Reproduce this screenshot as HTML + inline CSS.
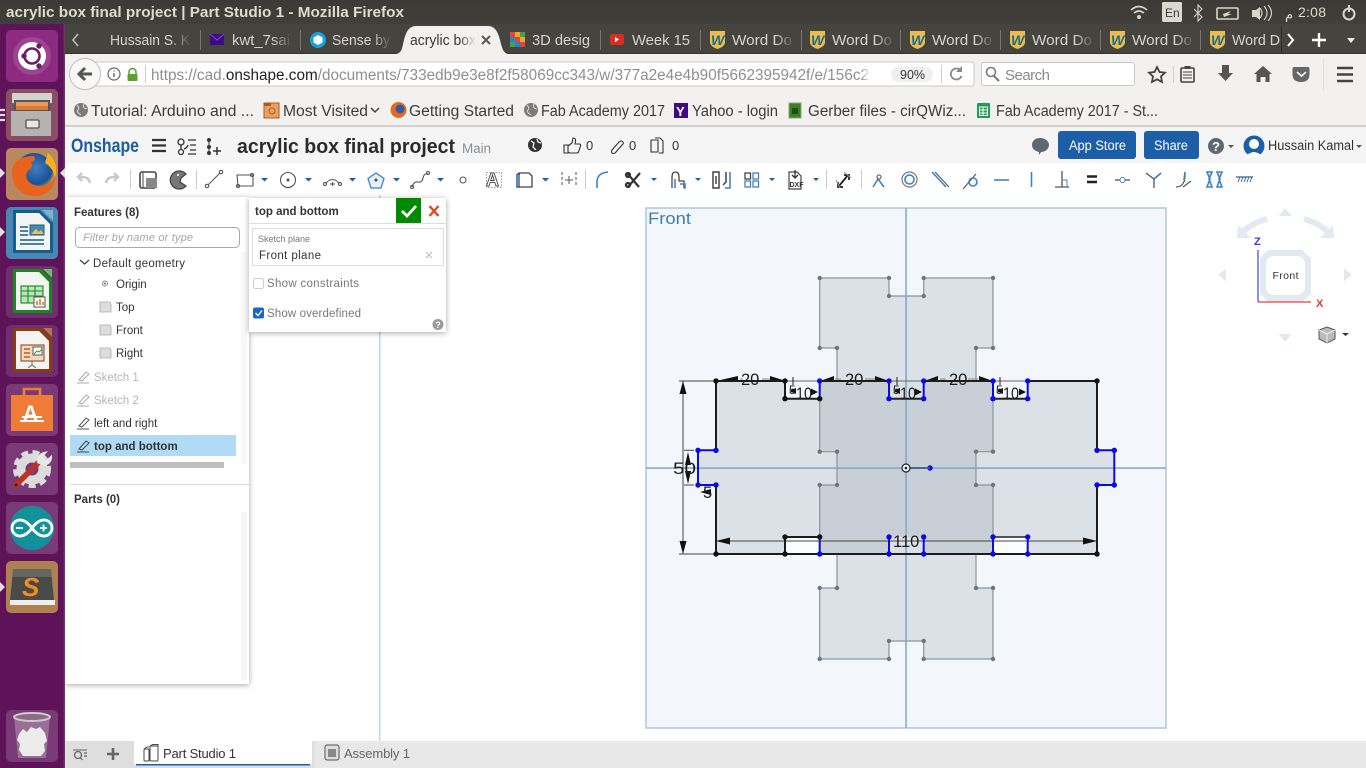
<!DOCTYPE html>
<html><head><meta charset="utf-8"><title>acrylic box final project | Part Studio 1 - Mozilla Firefox</title>
<style>
html,body{margin:0;padding:0;width:1366px;height:768px;overflow:hidden;background:#fff}
svg{display:block;position:absolute;left:0;top:0}
text{font-family:"Liberation Sans","DejaVu Sans",sans-serif}
.tab{font-size:15px;fill:#d6d5d0}
.bm{font-size:15.5px;fill:#3c3c3c}
.ft{font-size:11.5px;fill:#333}
.dim{font-size:16.5px;fill:#1c1c1c}
.car{fill:#1f5fa5}
.ti{fill:none;stroke:#555;stroke-width:1.1}
.tb{fill:none;stroke:#3d82c4;stroke-width:1.6}
.sk{fill:none;stroke:#1c1c1c;stroke-width:2}
.sb{fill:none;stroke:#0a0ae6;stroke-width:2}
.vl{fill:none;stroke:#8b939b;stroke-width:1.2}
</style></head><body>
<svg width="1366" height="768" viewBox="0 0 1366 768" xmlns="http://www.w3.org/2000/svg">
<defs>
<linearGradient id="top" x1="0" y1="0" x2="0" y2="1"><stop offset="0" stop-color="#3b3a36"/><stop offset="1" stop-color="#46453f"/></linearGradient>
<linearGradient id="fade" x1="0" x2="1" y1="0" y2="0"><stop offset="0" stop-color="#45443f" stop-opacity="0"/><stop offset="1" stop-color="#45443f"/></linearGradient>
<linearGradient id="fadew" x1="0" x2="1" y1="0" y2="0"><stop offset="0" stop-color="#f2f1f0" stop-opacity="0"/><stop offset="1" stop-color="#f2f1f0"/></linearGradient>
<linearGradient id="urlf" x1="0" x2="1" y1="0" y2="0"><stop offset="0" stop-color="#fff" stop-opacity="0"/><stop offset="1" stop-color="#fff"/></linearGradient>
<radialGradient id="ffx" cx=".55" cy=".4" r=".6"><stop offset="0" stop-color="#3d7fc0"/><stop offset=".7" stop-color="#1e4f95"/><stop offset="1" stop-color="#f5b21a"/></radialGradient>
<filter id="sh" x="-10%" y="-10%" width="125%" height="120%"><feDropShadow dx="0" dy="1" stdDeviation="3" flood-color="#000" flood-opacity=".35"/></filter>
</defs>

<!-- top panel -->
<rect width="1366" height="54" fill="url(#top)"/>
<text x="6" y="17" font-size="14.5" font-weight="bold" fill="#dfdbd2" textLength="398" lengthAdjust="spacingAndGlyphs">acrylic box final project | Part Studio 1 - Mozilla Firefox</text>
<!-- indicators -->
<g fill="none" stroke="#d8d5cd" stroke-width="1.6">
<path d="M1131 10q8-7 16 0M1134 13q5-4 10 0"/><circle cx="1139" cy="17" r="1.2" fill="#d8d5cd"/>
<path d="M1194 9l8 8-4 4v-16l4 4-8 8" stroke-width="1.1"/>
<rect x="1217" y="8" width="21" height="11" rx="1"/><path d="M1223 14l8-3-3 3 4 0-8 3z" fill="#d8d5cd" stroke="none"/>
<path d="M1260 8q4 5 0 10M1264 6q6 7 0 14M1268 5q7 8 0 16" stroke-width="1.1"/>
<path d="M1349 5v7" stroke-width="2"/><circle cx="1349" cy="14" r="5.5" stroke-width="2"/>
</g>
<rect x="1162" y="2" width="20" height="20" rx="1.5" fill="#dbd8d1"/>
<text x="1165" y="17" font-size="12" fill="#3b3a36">En</text>
<path d="M1252 10h4l4-3v13l-4-3h-4z" fill="#d8d5cd"/>
<text x="1285" y="19" font-size="13" fill="#dfdbd2" font-family="Noto Sans CJK SC">م</text>
<text x="1298" y="17" font-size="14" fill="#dfdbd2" textLength="28">2:08</text>

<!-- tabs -->
<rect y="24" x="65" width="1301" height="30" fill="#45443f"/>
<rect x="65" y="53" width="1301" height="1" fill="#35342f"/>
<path d="M78 34l-5 6 5 6" fill="none" stroke="#bbb" stroke-width="1.6"/>
<text x="110" y="45" class="tab" textLength="80" lengthAdjust="spacingAndGlyphs">Hussain S. K</text>
<rect x="170" y="30" width="22" height="20" fill="url(#fade)"/>
<rect x="200" y="30" width="1" height="20" fill="#77766f"/>
<rect x="210" y="34" width="14" height="11" fill="#400a87"/><path d="M210 34l7 6 7-6" fill="none" stroke="#7a55b0"/>
<text x="232" y="45" class="tab" textLength="58" lengthAdjust="spacingAndGlyphs">kwt_7sai</text>
<rect x="272" y="30" width="20" height="20" fill="url(#fade)"/>
<rect x="300" y="30" width="1" height="20" fill="#77766f"/>
<circle cx="318" cy="40" r="8" fill="#16a3dd"/><path d="M318 35l4.500 2.500v5l-4.500 2.500-4.500-2.500v-5z" fill="#fff"/>
<text x="332" y="45" class="tab" textLength="58" lengthAdjust="spacingAndGlyphs">Sense by</text>
<rect x="372" y="30" width="20" height="20" fill="url(#fade)"/>
<path d="M396 54c6-1 6-6 8-14 2-8 5-14 12-14h72c7 0 10 6 12 14 2 8 3 13 8 14z" fill="#f2f1f0"/>
<text x="410" y="45" font-size="15" fill="#3c3b37" textLength="66" lengthAdjust="spacingAndGlyphs">acrylic box</text>
<rect x="460" y="30" width="16" height="20" fill="url(#fadew)"/>
<path d="M482 36l8 8m0-8l-8 8" stroke="#5a5a5a" stroke-width="2"/>
<g>
<rect x="510" y="32" width="5" height="5" fill="#d9483b"/><rect x="515" y="32" width="5" height="5" fill="#f0a428"/><rect x="520" y="32" width="5" height="5" fill="#3aa655"/>
<rect x="510" y="37" width="5" height="5" fill="#2f7fc2"/><rect x="515" y="37" width="5" height="5" fill="#d9483b"/><rect x="520" y="37" width="5" height="5" fill="#f0a428"/>
<rect x="510" y="42" width="5" height="5" fill="#3aa655"/><rect x="515" y="42" width="5" height="5" fill="#2f7fc2"/><rect x="520" y="42" width="5" height="5" fill="#d9483b"/>
</g>
<text x="532" y="45" class="tab" textLength="58" lengthAdjust="spacingAndGlyphs">3D desig</text>
<rect x="600" y="30" width="1" height="20" fill="#77766f"/>
<rect x="610" y="34" width="14" height="11" rx="2.500" fill="#dc2d22"/><path d="M615 37v5l4-2.500z" fill="#fff"/>
<text x="632" y="45" class="tab" textLength="58" lengthAdjust="spacingAndGlyphs">Week 15</text>
<rect x="700" y="30" width="1" height="20" fill="#77766f"/>
<path d="M710 31h15v12q-1 4-7.500 6-6.500-2-7.500-6z" fill="#eebc4d"/><text x="711" y="45" font-size="14" font-weight="bold" font-style="italic" fill="#1c6c8c">W</text>
<text x="732" y="45" class="tab" textLength="60" lengthAdjust="spacingAndGlyphs">Word Do</text><rect x="775" y="30" width="20" height="20" fill="url(#fade)"/>
<rect x="801" y="30" width="1" height="20" fill="#77766f"/>
<path d="M810 31h15v12q-1 4-7.500 6-6.500-2-7.500-6z" fill="#eebc4d"/><text x="811" y="45" font-size="14" font-weight="bold" font-style="italic" fill="#1c6c8c">W</text>
<text x="832" y="45" class="tab" textLength="60" lengthAdjust="spacingAndGlyphs">Word Do</text><rect x="875" y="30" width="20" height="20" fill="url(#fade)"/>
<rect x="900" y="30" width="1" height="20" fill="#77766f"/>
<path d="M910 31h15v12q-1 4-7.500 6-6.500-2-7.500-6z" fill="#eebc4d"/><text x="911" y="45" font-size="14" font-weight="bold" font-style="italic" fill="#1c6c8c">W</text>
<text x="932" y="45" class="tab" textLength="60" lengthAdjust="spacingAndGlyphs">Word Do</text><rect x="975" y="30" width="20" height="20" fill="url(#fade)"/>
<rect x="1000" y="30" width="1" height="20" fill="#77766f"/>
<path d="M1010 31h15v12q-1 4-7.500 6-6.500-2-7.500-6z" fill="#eebc4d"/><text x="1011" y="45" font-size="14" font-weight="bold" font-style="italic" fill="#1c6c8c">W</text>
<text x="1032" y="45" class="tab" textLength="60" lengthAdjust="spacingAndGlyphs">Word Do</text><rect x="1075" y="30" width="20" height="20" fill="url(#fade)"/>
<rect x="1100" y="30" width="1" height="20" fill="#77766f"/>
<path d="M1110 31h15v12q-1 4-7.500 6-6.500-2-7.500-6z" fill="#eebc4d"/><text x="1111" y="45" font-size="14" font-weight="bold" font-style="italic" fill="#1c6c8c">W</text>
<text x="1132" y="45" class="tab" textLength="60" lengthAdjust="spacingAndGlyphs">Word Do</text><rect x="1175" y="30" width="20" height="20" fill="url(#fade)"/>
<rect x="1200" y="30" width="1" height="20" fill="#77766f"/>
<path d="M1210 31h15v12q-1 4-7.500 6-6.500-2-7.500-6z" fill="#eebc4d"/><text x="1211" y="45" font-size="14" font-weight="bold" font-style="italic" fill="#1c6c8c">W</text>
<text x="1232" y="45" class="tab" textLength="48" lengthAdjust="spacingAndGlyphs">Word D</text>
<rect x="1281" y="26" width="1" height="27" fill="#2c2b27"/>
<path d="M1288 34l5 6-5 6" fill="none" stroke="#fff" stroke-width="2"/>
<path d="M1319 33v14M1312 40h14" stroke="#fff" stroke-width="2.400"/>
<path d="M1347 38h8l-4 5z" fill="#eee"/>

<!-- nav bar -->
<rect x="65" y="54" width="1301" height="72" fill="#f2f1f0"/>
<rect x="65" y="125" width="1301" height="2" fill="#cfcfcd"/>
<rect x="94" y="62" width="880" height="24" rx="2" fill="#fff" stroke="#c9c9c7"/>
<circle cx="85" cy="74" r="15.500" fill="#f8f8f7" stroke="#bfbfbd"/>
<path d="M92 74h-11M85 68l-6 6 6 6" fill="none" stroke="#555" stroke-width="3"/>
<circle cx="114" cy="74" r="6" fill="none" stroke="#666" stroke-width="1.200"/><path d="M114 73v4M114 70.500v1" stroke="#666" stroke-width="1.400"/>
<path d="M129 74v-2a3.500 3.500 0 0 1 7 0v2" fill="none" stroke="#58a32f" stroke-width="1.500"/><rect x="127.500" y="74" width="10" height="7" rx="1" fill="#58a32f"/>
<rect x="145" y="65" width="1" height="18" fill="#ccc"/>
<text x="151" y="80" font-size="15.500" fill="#8f8f8f" textLength="718" lengthAdjust="spacingAndGlyphs"><tspan>https://cad.</tspan><tspan fill="#222">onshape.com</tspan><tspan>/documents/733edb9e3e8f2f58069cc343/w/377a2e4e4b90f5662395942f/e/156c2</tspan></text>
<rect x="861" y="63" width="10" height="22" fill="url(#urlf)"/>
<rect x="871" y="63" width="18" height="22" fill="#fff"/>
<rect x="891" y="67" width="42" height="15" rx="7.500" fill="#efefef"/>
<text x="900" y="79" font-size="12.500" fill="#333">90%</text>
<rect x="941" y="65" width="1" height="18" fill="#ccc"/>
<path d="M961 71a5.500 5.500 0 1 0 .5 5" fill="none" stroke="#888" stroke-width="1.800"/><path d="M962 66v6h-6z" fill="#888"/>
<rect x="981.500" y="62.500" width="153" height="23" rx="2" fill="#fff" stroke="#c9c9c7"/>
<circle cx="991" cy="72" r="4.500" fill="none" stroke="#777" stroke-width="1.600"/><path d="M994 76l5 5" stroke="#777" stroke-width="2"/>
<text x="1005" y="80" font-size="15" fill="#8a8a8a" textLength="45">Search</text>
<path d="M1157 67l2.500 5 5.500.7-4 3.800 1 5.500-5-2.700-5 2.700 1-5.500-4-3.800 5.500-.7z" fill="none" stroke="#444" stroke-width="1.800"/>
<rect x="1173" y="66" width="1" height="17" fill="#d0d0ce"/>
<rect x="1181" y="68" width="13" height="14" rx="1" fill="none" stroke="#444" stroke-width="1.600"/><rect x="1184.500" y="66" width="6" height="3" fill="#444"/><path d="M1183 72h9M1183 75h9M1183 78h9" stroke="#444"/>
<path d="M1222 65h7v8h4l-7.500 8-7.500-8h4z" fill="#555"/>
<path d="M1263 66l9 8h-2.500v8h-4v-5h-5v5h-4v-8h-2.500z" fill="#555"/>
<path d="M1294 67h14q1.500 0 1.500 2v5q0 8-8.500 8t-8.500-8v-5q0-2 1.500-2z" fill="#666"/><path d="M1297 72l4.500 4 4.500-4" stroke="#f2f1f0" stroke-width="1.800" fill="none"/>
<rect x="1323" y="58" width="1" height="32" fill="#dcdcda"/>
<path d="M1337 68h16M1337 74.500h16M1337 81h16" stroke="#444" stroke-width="2.600"/>

<!-- bookmarks -->
<circle cx="81" cy="110" r="7" fill="#7b7b7b"/><path d="M77 105q3 3 1 5t3 5M84 104q-2 4 3 5" stroke="#ddd" fill="none"/>
<text x="91" y="116" class="bm" textLength="163" lengthAdjust="spacingAndGlyphs">Tutorial: Arduino and ...</text>
<rect x="264" y="103" width="15" height="15" fill="#e8a268" stroke="#b25a18"/><circle cx="272" cy="111" r="3" fill="none" stroke="#b25a18"/><rect x="264" y="103" width="7" height="3" fill="#b25a18"/>
<text x="283" y="116" class="bm" textLength="85" lengthAdjust="spacingAndGlyphs">Most Visited</text>
<path d="M371 108l4 4 4-4" fill="none" stroke="#444" stroke-width="1.500"/>
<circle cx="398.500" cy="110" r="8" fill="#e8691c"/><circle cx="400" cy="109" r="4.500" fill="#2c5ba8"/>
<text x="409" y="116" class="bm" textLength="105" lengthAdjust="spacingAndGlyphs">Getting Started</text>
<circle cx="531" cy="110" r="7" fill="#7b7b7b"/><path d="M527 105q3 3 1 5t3 5M534 104q-2 4 3 5" stroke="#ddd" fill="none"/>
<text x="541" y="116" class="bm" textLength="124" lengthAdjust="spacingAndGlyphs">Fab Academy 2017</text>
<rect x="674" y="103" width="14" height="15" fill="#400a87"/><text x="676" y="116" font-size="13" font-weight="bold" fill="#fff">Y</text>
<text x="692" y="116" class="bm" textLength="86" lengthAdjust="spacingAndGlyphs">Yahoo - login</text>
<rect x="789" y="103" width="12" height="15" fill="#3f7a2a" stroke="#88aa66"/><rect x="792" y="108" width="6" height="6" fill="#1e4f12"/>
<text x="808" y="116" class="bm" textLength="158" lengthAdjust="spacingAndGlyphs">Gerber files - cirQWiz...</text>
<rect x="977" y="103" width="13" height="15" rx="1" fill="#1f9d55"/><path d="M979.500 107h8v8.500h-8zM979.500 110h8M979.500 113h8M983 107v8.500" fill="none" stroke="#fff"/>
<text x="996" y="116" class="bm" textLength="162" lengthAdjust="spacingAndGlyphs">Fab Academy 2017 - St...</text>

<!-- Onshape header -->
<rect x="65" y="127" width="1301" height="36" fill="#f5f5f5"/>
<text x="71" y="152" font-size="19" font-weight="bold" fill="#1a5ca5" textLength="68" lengthAdjust="spacingAndGlyphs">Onshape</text>
<path d="M152 140h14M152 145.500h14M152 151h14" stroke="#333" stroke-width="2.200"/>
<g fill="none" stroke="#333" stroke-width="1.300"><circle cx="181" cy="142" r="3"/><circle cx="181" cy="152" r="2.500"/><path d="M181 145v5M184 149q3-1 4-4M188 140h8M190 145h6M190 150h6M188 154h8"/></g>
<circle cx="209" cy="140" r="2" fill="#333"/><circle cx="209" cy="147" r="2" fill="#333"/><circle cx="209" cy="153" r="2" fill="#333"/><path d="M209 138v17" stroke="#333"/><path d="M217 147v8M213 151h8" stroke="#333" stroke-width="1.500"/>
<text x="237" y="153" font-size="20" font-weight="bold" fill="#2b2b2b" textLength="218" lengthAdjust="spacingAndGlyphs">acrylic box final project</text>
<text x="462" y="153" font-size="13.500" fill="#8b8f94" textLength="29">Main</text>
<circle cx="535" cy="145" r="7" fill="#333"/><path d="M531 141l3 2-1 4 3 3M537 139l1 3 3 1" stroke="#f5f5f5" fill="none" stroke-width="1.300"/>
<g fill="none" stroke="#333" stroke-width="1.100">
<path d="M564 145h4v8h-4zM568 146l4-3 1-5q3 0 2.500 3l-.5 3h4.500q1.500 0 1 2l-2 6q-.5 1-2 1h-7l-1.500-1"/>
<path d="M612 150l7-8q3-2 4 0t-1 3l-7 8q-2 1-3 0t0-3z"/>
<path d="M651 140h7v12h-7zM655 138h5l3 3v12h-4"/>
</g>
<text x="586" y="150" font-size="13" fill="#333">0</text>
<text x="629" y="150" font-size="13" fill="#333">0</text>
<text x="672" y="150" font-size="13" fill="#333">0</text>
<path d="M1040 138c5 0 9 3 9 7s-4 7-8 7l-2 3v-3c-4-1-7-3-7-7s3-7 8-7z" fill="#5f6871"/>
<rect x="1058" y="131" width="78" height="28" rx="3" fill="#1c5ea8"/>
<text x="1069" y="150" font-size="13.500" fill="#fff" textLength="57" lengthAdjust="spacingAndGlyphs">App Store</text>
<rect x="1144" y="131" width="55" height="28" rx="3" fill="#1c5ea8"/>
<text x="1154" y="150" font-size="13.500" fill="#fff" textLength="34" lengthAdjust="spacingAndGlyphs">Share</text>
<circle cx="1216" cy="146" r="8" fill="#5f6871"/><text x="1212" y="151" font-size="13" font-weight="bold" fill="#fff">?</text>
<path d="M1228 145h6l-3 3z" fill="#555"/>
<circle cx="1254" cy="146" r="10.500" fill="#1c5ea8"/><circle cx="1254" cy="144" r="5" fill="#fff"/><path d="M1245 157q9-10 18 0z" fill="#fff"/>
<text x="1268" y="150" font-size="13.500" fill="#333" textLength="86" lengthAdjust="spacingAndGlyphs">Hussain Kamal</text>
<path d="M1356 145h6l-3 3z" fill="#555"/>

<!-- toolbar -->
<rect x="65" y="163" width="1301" height="578" fill="#fff"/>
<g fill="none" stroke="#c9c9c9" stroke-width="2.400"><path d="M90 183q-1-6-8-6h-3M82 173l-4 4 4 4"/><path d="M106 183q1-6 8-6h3M114 173l4 4-4 4"/></g>
<rect x="130" y="170" width="1" height="19" fill="#ccc"/>
<rect x="196" y="170" width="1" height="19" fill="#ccc"/>
<rect x="140" y="172" width="16" height="16" rx="2" fill="none" stroke="#444" stroke-width="1.600"/><rect x="146" y="178" width="11" height="10" fill="#888"/><path d="M143 172v16" stroke="#444"/>
<path d="M186 174a9 9 0 1 0 0 12l-6-4 1-4z" fill="#777" stroke="#444" stroke-width="1.300"/><circle cx="178" cy="175" r="1" fill="#fff"/>
<g class="ti"><path d="M207 186l14-14" class="ti"/><circle cx="207" cy="186" r="1.700" fill="#fff"/><circle cx="221" cy="172" r="1.700" fill="#fff"/>
<path d="M237 175h16v11h-15z" class="ti"/><circle cx="238" cy="186" r="1.500" fill="#fff" class="ti"/><circle cx="252" cy="175" r="1.500" fill="#fff" class="ti"/>
<circle cx="288" cy="180" r="7.500" class="ti"/><circle cx="288" cy="180" r="1" fill="#444"/>
<path d="M326 184a7 7 0 0 1 13 0" class="ti"/><circle cx="325" cy="184" r="1.500" fill="#fff" class="ti"/><circle cx="340" cy="184" r="1.500" fill="#fff" class="ti"/><path d="M330 184h5M332.500 182v4" class="ti" stroke-width="1"/>
<path d="M376 173l8 5.500-3 9.500h-10l-3-9.500z" fill="#e8f1fa" stroke="#3d82c4" stroke-width="1.300"/><circle cx="376" cy="180" r="1" fill="#333"/>
<path d="M412 187q2-6 6-5t5-4 5-4" class="ti"/><circle cx="412" cy="187" r="1.500" fill="#fff" class="ti"/><circle cx="428" cy="173" r="1.500" fill="#fff" class="ti"/>
<circle cx="463" cy="180" r="3" fill="#fff" class="ti"/>
</g>
<text x="486" y="186" font-size="18" fill="#fff" stroke="#444" stroke-width=".9" font-weight="bold">A</text>
<rect x="486.500" y="172.500" width="15" height="15" fill="none" stroke="#999" stroke-dasharray="1.500 1.500"/>
<path d="M517 174h3M517 174v13h2" stroke="#3d82c4" stroke-width="1.800" fill="none"/>
<path d="M519 173h10l3 3v11h-13z" fill="none" stroke="#444" stroke-width="1.300"/>
<path d="M261 178h7l-3.500 3.500zM305 178h7l-3.500 3.500zM349 178h7l-3.500 3.500zM393 178h7l-3.500 3.500zM437 178h7l-3.500 3.500zM542 178h7l-3.500 3.500zM651 178h6l-3 3zM695 178h6l-3 3zM769 178h6l-3 3zM813 178h6l-3 3z" class="car"/>
<path d="M562 172v15M576 172v15" stroke="#555" stroke-dasharray="3 2" fill="none"/><path d="M565 180h8M569 176v8" stroke="#555"/>
<rect x="585" y="170" width="1" height="19" fill="#ccc"/>
<path d="M597 188v-6q0-9 11-10" class="tb"/>
<g fill="none" stroke="#333" stroke-width="2.200"><path d="M627 173l12 14M640 173l-12 14"/><circle cx="628" cy="175" r="2"/><circle cx="628" cy="185" r="2"/></g>
<path d="M672 188v-11q0-5 3.500-5t3.500 5v4h5v7" fill="none" stroke="#444" stroke-width="1.300"/><path d="M675 188v-9M680 184h5v5" class="tb" stroke-width="1.200"/>
<path d="M713 172h6v16h-6zM716 176v8M726 172v10l-3 3" fill="none" stroke="#444" stroke-width="1.500"/><path d="M730 172v16h-5" class="tb" stroke-width="1.300"/>
<g fill="none" stroke-width="1.300"><rect x="745" y="173" width="5.500" height="6" stroke="#444"/><rect x="753" y="173" width="5.500" height="6" stroke="#3d82c4"/><rect x="745" y="181" width="5.500" height="6" stroke="#3d82c4"/><rect x="753" y="181" width="5.500" height="6" stroke="#3d82c4"/></g>
<path d="M789 172h8l4 4v13h-12z" fill="#fff" stroke="#444" stroke-width="1.200"/><path d="M795 170v7M792 175l3 3 3-3" fill="none" stroke="#333" stroke-width="1.300"/><text x="789.500" y="187" font-size="7" font-weight="bold" fill="#333">DXF</text>
<rect x="826" y="170" width="1" height="19" fill="#ccc"/>
<path d="M839 186l9-11M838 182v5h5M844 175h5v5" fill="none" stroke="#222" stroke-width="1.800"/><path d="M844 172l7 6M836 180l4 8" fill="none" stroke="#999"/>
<rect x="861" y="170" width="1" height="19" fill="#ccc"/>
<path d="M873 187l5-8M884 187l-6-8" class="tb" stroke-width="1.300"/><circle cx="879" cy="177" r="2" fill="#fff" class="ti"/>
<circle cx="909.500" cy="179.500" r="7.500" fill="none" stroke="#777" stroke-width="1.200"/><circle cx="909.500" cy="179.500" r="4.500" class="tb"/>
<path d="M932 172l14 15" class="tb"/><path d="M935 172l14 15" fill="none" stroke="#555" stroke-width="1.100"/>
<path d="M963 189l13-15" fill="none" stroke="#555" stroke-width="1.100"/><circle cx="973" cy="182" r="4" class="tb" stroke-width="1.200"/>
<path d="M994 180h15" class="tb" stroke-width="2"/>
<path d="M1031.500 172v15" class="tb" stroke-width="2"/>
<path d="M1055 187h14M1062 171v16" fill="none" stroke="#555" stroke-width="1.300"/><path d="M1062 180h5v7" fill="none" stroke="#3d82c4"/>
<path d="M1087 176.500h10M1087 182h10" stroke="#222" stroke-width="2.400"/>
<path d="M1115 180h15" stroke="#555" stroke-width="1.300"/><circle cx="1122.500" cy="180" r="2.500" fill="#fff" stroke="#3d82c4"/>
<path d="M1146 173l8 6 7-6M1154 179v9" fill="none" stroke="#555" stroke-width="1.300"/><path d="M1154 179l7-6" class="tb" stroke-width="1.200"/>
<path d="M1176 187q10 0 9-15M1183 187l8-6" fill="none" stroke="#555" stroke-width="1.200"/><path d="M1184 180l1-8" class="tb" stroke-width="1.200"/>
<path d="M1207 172h5l-3 7 3 8h-5l3-8zM1222 172h-5l3 7-3 8h5l-3-8z" class="tb" stroke-width="1"/>
<path d="M1236 177h17" stroke="#3d82c4" stroke-width="1.600"/><path d="M1238 182l2-5M1241 182l2-5M1244 182l2-5M1247 182l2-5M1250 182l2-5" stroke="#555" stroke-width=".9"/>

<!-- canvas -->
<rect x="379" y="195" width="1.500" height="546" fill="#b7d9ee"/>
<rect x="646" y="208" width="520" height="520" fill="#f3f7fc" stroke="#a8c2dc" stroke-width="1.400"/>
<text x="648" y="224" font-size="17" fill="#3f7db5" textLength="43" lengthAdjust="spacingAndGlyphs">Front</text>

<!-- vertical shape -->
<path d="M819.700 278H889V296H923.700V278H993V348H976V381H993V451H976V485H993V554H976V588H993V659H923.700V641H889V659H819.700V588H837V554H819.700V485H837V451H819.700V381H837V348H819.700Z" fill="#7c8490" fill-opacity=".19"/>
<!-- horizontal shape -->
<path d="M716 381H785V399H819.700V381H889V399H923.700V381H993V399H1027.700V381H1097V450.300H1114.300V485H1097V554H1027.700V537H993V554H923.700V537H889V554H819.700V537H785V554H716V485H698V450.300H716Z" fill="#7c8490" fill-opacity=".19"/>
<rect x="785" y="537" width="35" height="17" fill="#fbfcfe"/><rect x="993" y="537" width="35" height="17" fill="#fbfcfe"/>
<path d="M819.700 278H889V296H923.700V278H993V348H976V381M819.700 278V348H837V381M819.700 399V451.700H837V485H819.700V554M993 399V451.700H976V485H993V554M837 554V588H819.700V659H889V641H923.700V659H993V588H976V554" class="vl"/>
<rect x="905.300" y="208" width="1.500" height="520" fill="#7fa5cf"/>
<rect x="646" y="467.300" width="520" height="1.500" fill="#7fa5cf"/>
<g fill="#6d757d">
<circle cx="819.700" cy="278" r="2.200"/><circle cx="889" cy="278" r="2.200"/><circle cx="889" cy="296" r="2.200"/><circle cx="923.700" cy="296" r="2.200"/><circle cx="923.700" cy="278" r="2.200"/><circle cx="993" cy="278" r="2.200"/>
<circle cx="819.700" cy="348" r="2.200"/><circle cx="837" cy="348" r="2.200"/><circle cx="976" cy="348" r="2.200"/><circle cx="993" cy="348" r="2.200"/>
<circle cx="819.700" cy="451.700" r="2.200"/><circle cx="837" cy="451.700" r="2.200"/><circle cx="976" cy="451.700" r="2.200"/><circle cx="993" cy="451.700" r="2.200"/>
<circle cx="819.700" cy="485" r="2.200"/><circle cx="837" cy="485" r="2.200"/><circle cx="976" cy="485" r="2.200"/><circle cx="993" cy="485" r="2.200"/>
<circle cx="819.700" cy="588" r="2.200"/><circle cx="837" cy="588" r="2.200"/><circle cx="976" cy="588" r="2.200"/><circle cx="993" cy="588" r="2.200"/>
<circle cx="819.700" cy="659" r="2.200"/><circle cx="889" cy="659" r="2.200"/><circle cx="889" cy="641" r="2.200"/><circle cx="923.700" cy="641" r="2.200"/><circle cx="923.700" cy="659" r="2.200"/><circle cx="993" cy="659" r="2.200"/>
</g>

<!-- dimension lines -->
<path d="M679 381H716M679 554H716M683 381V554M716 541H1097M684 450.300H694M684 485H694" stroke="#444" fill="none"/>
<path d="M785 381H820M889 381H924M993 381H1028" stroke="#666" fill="none"/>
<path d="M683 381l-3.500 13h7zM683 554l-3.500-13h7zM716 541l14-3.500v7zM1097 541l-14-3.500v7z" fill="#111"/>
<path d="M688 452l-3 13h6zM688 484l-3-13h6z" fill="#111"/>
<path d="M716 381l22-5v6zM786 381l-16-5v6zM820 381l14-5v5.500zM889 381l-14-5v5.500zM924 381l14-5v5.500zM993 381l-14-5v5.500z" fill="#111"/>
<path d="M818 392l-7-3.500v7zM922 392l-7-3.500v7zM1026 392l-7-3.500v7zM789 391l7-3v6zM893 391l7-3v6zM996 391l7-3v6zM700 492l11-3v6z" fill="#111"/>
<path d="M793 377v8M897 377v8M1000 377v8" stroke="#222"/>
<path d="M740 379h3M762 379h8M835 379h6M865 379h10M940 379h6M968 379h10" stroke="#888"/>

<!-- sketch outline -->
<path d="M785 381H716V450.300M716 485V554H1097V485M1097 450.300V381H1027.700M993 381H923.700M889 381H819.700M785 381V398.700H819.700M785 554V537H819.700" class="sk"/>
<path d="M716 450.300H698V485H716M819.700 381V398.700M889 381V398.700M923.700 398.700V381M993 381V398.700M1027.700 398.700V381M819.700 537V554M889 537V554M923.700 537V554M993 537V554M1027.700 537V554M1097 450.300H1114.300V485H1097" class="sb"/>
<path d="M993 398.700H1027.700M889 398.700H923.700" stroke="#222" stroke-width="2"/>
<path d="M993 537H1027.700" stroke="#222" stroke-width="1.500"/>
<g fill="#111"><circle cx="716" cy="381" r="2.700"/><circle cx="785" cy="381" r="2.700"/><circle cx="785" cy="398.700" r="2.700"/><circle cx="819.700" cy="398.700" r="2.700"/><circle cx="1097" cy="381" r="2.700"/><circle cx="716" cy="554" r="2.700"/><circle cx="785" cy="554" r="2.700"/><circle cx="785" cy="537" r="2.700"/><circle cx="819.700" cy="537" r="2.700"/><circle cx="1097" cy="554" r="2.700"/></g>
<g fill="#0a0ae6"><circle cx="819.700" cy="381" r="2.700"/><circle cx="889" cy="381" r="2.700"/><circle cx="923.700" cy="381" r="2.700"/><circle cx="993" cy="381" r="2.700"/><circle cx="1027.700" cy="381" r="2.700"/><circle cx="889" cy="398.700" r="2.700"/><circle cx="923.700" cy="398.700" r="2.700"/><circle cx="993" cy="398.700" r="2.700"/><circle cx="1027.700" cy="398.700" r="2.700"/>
<circle cx="698" cy="450.300" r="2.700"/><circle cx="716" cy="450.300" r="2.700"/><circle cx="698" cy="485" r="2.700"/><circle cx="716" cy="485" r="2.700"/><circle cx="1097" cy="450.300" r="2.700"/><circle cx="1114.300" cy="450.300" r="2.700"/><circle cx="1097" cy="485" r="2.700"/><circle cx="1114.300" cy="485" r="2.700"/>
<circle cx="819.700" cy="554" r="2.700"/><circle cx="889" cy="537" r="2.700"/><circle cx="889" cy="554" r="2.700"/><circle cx="923.700" cy="537" r="2.700"/><circle cx="923.700" cy="554" r="2.700"/><circle cx="993" cy="537" r="2.700"/><circle cx="993" cy="554" r="2.700"/><circle cx="1027.700" cy="537" r="2.700"/><circle cx="1027.700" cy="554" r="2.700"/><circle cx="930" cy="468" r="2.700"/></g>
<path d="M910 468H930" stroke="#3d5f85" stroke-width="1.800"/>
<circle cx="906" cy="468" r="4" fill="#eef2f6" stroke="#222" stroke-width="1.200"/><circle cx="906" cy="468" r="1.300" fill="#222"/>

<!-- dim text -->
<text x="741" y="385" class="dim">20</text><text x="845" y="385" class="dim">20</text><text x="949" y="385" class="dim">20</text>
<text x="796" y="399" class="dim" textLength="16" lengthAdjust="spacingAndGlyphs">10</text><text x="900" y="399" class="dim" textLength="16" lengthAdjust="spacingAndGlyphs">10</text><text x="1003" y="399" class="dim" textLength="16" lengthAdjust="spacingAndGlyphs">10</text>
<text x="789" y="394" class="dim" style="font-size:12px">5</text><text x="893" y="394" class="dim" style="font-size:12px">5</text><text x="996" y="394" class="dim" style="font-size:12px">5</text>
<text x="893" y="547" class="dim">110</text>
<text x="673" y="474" class="dim" textLength="23" lengthAdjust="spacingAndGlyphs">50</text>
<text x="703" y="498" class="dim">5</text>

<!-- nav cube -->
<g fill="#e3e9f0">
<path d="M1285 208l6.500 8h-13zM1218 275l8-6.500v13zM1352 275l-8-6.500v13zM1285 342l-6.500-8h13z"/>
<path d="M1237 238l1-13 13 13z"/><path d="M1334 238l-1-13-13 13z"/>
<path d="M1268 250h34l9 8v36l-9 8h-34l-8-8v-36z"/>
</g>
<path d="M1267 219q-15 4-24 13M1304 219q15 4 24 13" fill="none" stroke="#e3e9f0" stroke-width="6"/>
<rect x="1266" y="256" width="39" height="39" rx="8" fill="#fff"/>
<text x="1272.500" y="279" font-size="10.500" fill="#333" textLength="26">Front</text>
<path d="M1258 250V302" stroke="#5a5aee" stroke-width="1.400"/><path d="M1258 302H1311" stroke="#ee5a5a" stroke-width="1.400"/>
<text x="1254" y="245" font-size="11" font-weight="bold" fill="#3a3ae0">Z</text>
<text x="1316" y="307" font-size="11" font-weight="bold" fill="#e03a3a">X</text>
<path d="M1319 330l8-3 8 3v9l-8 4-8-4z" fill="#bbb" stroke="#555"/><path d="M1327 334l8-4M1327 334v9" stroke="#eee"/><path d="M1319 330l8 4" stroke="#eee"/>
<path d="M1342 333h7l-3.500 3z" fill="#333"/>

<!-- feature panel -->
<rect x="65" y="197" width="184" height="487" fill="#fff" filter="url(#sh)"/>
<rect x="241" y="512" width="6" height="168" fill="#f6f6f6"/>
<rect x="241" y="252" width="6" height="212" fill="#f8f8f8"/>
<text x="74" y="216" font-size="11.500" font-weight="bold" fill="#333">Features (8)</text>
<rect x="75.500" y="227.500" width="164" height="20" rx="4" fill="#fff" stroke="#aaa"/>
<text x="83" y="241" font-size="11" font-style="italic" fill="#a5a5a5" textLength="110">Filter by name or type</text>
<path d="M80 260l4.500 4 4.500-4" fill="none" stroke="#444" stroke-width="1.300"/>
<text x="93" y="267" class="ft" textLength="92">Default geometry</text>
<circle cx="105" cy="283.500" r="2.500" fill="none" stroke="#888"/><circle cx="105" cy="283.500" r="1" fill="#666"/>
<text x="116" y="288" class="ft">Origin</text>
<g fill="#ddd" stroke="#aaa" stroke-width=".8"><path d="M100 302h10l1 2v8h-11z"/><path d="M100 325h10l1 2v8h-11z"/><path d="M100 348h10l1 2v8h-11z"/></g>
<text x="116" y="311" class="ft">Top</text><text x="116" y="334" class="ft">Front</text><text x="116" y="357" class="ft">Right</text>
<g fill="none" stroke="#aaa"><path d="M79 380l7-8 3 2-7 7zM77 383h12"/><path d="M79 403l7-8 3 2-7 7zM77 406h12"/></g>
<g fill="none" stroke="#555"><path d="M79 426l7-8 3 2-7 7zM77 429h12"/></g>
<text x="94" y="381" class="ft" style="fill:#b5b5b5">Sketch 1</text>
<text x="94" y="404" class="ft" style="fill:#b5b5b5">Sketch 2</text>
<text x="94" y="427" class="ft">left and right</text>
<rect x="70" y="435" width="166" height="21" fill="#b0daf5"/>
<g fill="none" stroke="#444"><path d="M79 449l7-8 3 2-7 7zM77 452h12"/></g>
<text x="94" y="450" class="ft" font-weight="bold">top and bottom</text>
<rect x="70" y="462" width="154" height="6" fill="#bfbfbf"/>
<rect x="70" y="484" width="179" height="1" fill="#dcdcdc"/>
<text x="74" y="503" font-size="11.500" font-weight="bold" fill="#333">Parts (0)</text>

<!-- dialog -->
<rect x="249" y="198" width="197" height="134" fill="#fff" filter="url(#sh)"/>
<text x="255" y="215" font-size="11.500" font-weight="bold" fill="#333">top and bottom</text>
<rect x="396" y="198" width="25" height="25" fill="#008a00"/>
<path d="M402 211l5 5 9-10" fill="none" stroke="#fff" stroke-width="2.800"/>
<path d="M429.500 206l9 10m0-10l-9 10" stroke="#dc4a22" stroke-width="2.400"/>
<rect x="249" y="223" width="197" height="1" fill="#ddd"/>
<rect x="252.500" y="228.500" width="191" height="37" fill="#fff" stroke="#ddd"/>
<text x="258" y="242" font-size="9" fill="#777">Sketch plane</text>
<text x="259" y="259" font-size="11.500" fill="#333" textLength="62">Front plane</text>
<path d="M426 252l6 6m0-6l-6 6" stroke="#bbb"/>
<rect x="253.500" y="278.500" width="10" height="10" rx="2" fill="#fff" stroke="#ccc"/>
<text x="267" y="287" font-size="11.500" fill="#777" textLength="92">Show constraints</text>
<rect x="253" y="307.500" width="11" height="11" rx="2" fill="#1c66c2"/>
<path d="M255.500 313l2.500 2.500 4-5" fill="none" stroke="#fff" stroke-width="1.300"/>
<text x="267" y="317" font-size="11.500" fill="#777" textLength="94">Show overdefined</text>
<circle cx="438" cy="324.500" r="5.500" fill="#999"/><text x="435.300" y="328" font-size="9" font-weight="bold" fill="#fff">?</text>

<!-- bottom bar -->
<rect x="65" y="741" width="1301" height="27" fill="#e8e8e8"/>
<rect x="65" y="741" width="69" height="27" fill="#dedede"/>
<path d="M73 750h14" stroke="#666"/><circle cx="78" cy="755" r="3.500" fill="none" stroke="#666" stroke-width="1.300"/><path d="M80.500 758l2 2M84 753h3M84 756h3" stroke="#666" stroke-width="1.200"/>
<path d="M113 748v12M107 754h12" stroke="#666" stroke-width="2.600"/>
<rect x="134" y="765" width="180" height="3" fill="#dedede"/>
<rect x="312" y="741" width="3" height="27" fill="#dedede"/>
<path d="M134 741h178v20q0 4-4 4h-170q-4 0-4-4z" fill="#fff"/>
<rect x="136" y="764" width="174" height="1.500" fill="#1c5ea8"/>
<g fill="none" stroke="#444"><rect x="144" y="749" width="5" height="12" rx="1"/><rect x="150" y="746" width="8" height="15" rx="1"/><path d="M144 749l3-2h2M150 746l3-1.500h5v14"/></g>
<text x="163" y="758" font-size="13" fill="#333" textLength="73">Part Studio 1</text>
<rect x="325" y="745" width="14" height="15" rx="2" fill="#ddd" stroke="#555"/><rect x="328" y="749" width="8" height="8" fill="#888"/>
<text x="344" y="758" font-size="13" fill="#666" textLength="66">Assembly 1</text>

<!-- launcher -->
<rect x="0" y="24" width="65" height="744" fill="#5e1257"/>
<rect x="63.500" y="24" width="1.500" height="744" fill="#6f3368"/>
<!-- ubuntu -->
<rect x="6" y="30" width="52" height="52" rx="5" fill="#8c2b80"/>
<circle cx="32" cy="56" r="19" fill="#a2569a" opacity=".6"/>
<circle cx="32" cy="56" r="14" fill="#fff"/><circle cx="32" cy="56" r="7.500" fill="none" stroke="#6a1f60" stroke-width="2.600"/>
<circle cx="39" cy="46" r="2.700" fill="#6a1f60"/><circle cx="24" cy="56" r="2.700" fill="#6a1f60"/><circle cx="39" cy="66" r="2.700" fill="#6a1f60"/>
<!-- files -->
<rect x="6" y="89" width="52" height="52" rx="5" fill="#8b4d63"/>
<path d="M12 94q0-1 1-1h38q1 0 1 1v9H12z" fill="#d4d2cf"/>
<rect x="14" y="100" width="36" height="12" fill="#555"/><rect x="16" y="102" width="32" height="4" fill="#ea9a5a"/><rect x="16" y="106" width="32" height="4" fill="#d97a35"/>
<rect x="11" y="111" width="40" height="25" fill="#b5b3b1"/><rect x="26" y="120" width="13" height="8" rx="1" fill="#e8e8e8" stroke="#555" stroke-width="1.300"/>
<path d="M0 110l5 0M0 115l5 0M0 120l5 0" stroke="#e6dce4" stroke-width="2.200"/>
<!-- firefox -->
<rect x="6" y="148" width="52" height="52" rx="5" fill="#b98860"/>
<circle cx="34" cy="172" r="19" fill="url(#ffx)"/>
<path d="M13 166c-4 14 4 29 20 30 13 1 22-8 23-20-4 9-14 12-22 9-8-3-10-11-5-15 3-2 4-5 2-8 4-1 5-3 3-6-10 0-17 3-21 10z" fill="#e8641c"/>
<path d="M48 153c7 6 10 15 7 25-1-7-5-12-10-15z" fill="#f6b01f"/>
<!-- writer -->
<rect x="6" y="207" width="52" height="52" rx="5" fill="#4a86b2"/>
<path d="M13 210h27l13 13v30H13z" fill="#155d8c"/><path d="M16 213h23l11 11v26H16z" fill="#f4f4f2"/><path d="M42 210l11 0v11z" fill="#7eb0d0"/>
<path d="M20 227h8M20 231h8M20 235h8M20 240h24M20 244h24" stroke="#155d8c" stroke-width="1.600"/><rect x="30" y="225" width="14" height="10" fill="#4a86b2" stroke="#155d8c"/><path d="M31 234l5-5 3 3 2-2 3 4z" fill="#e8c060"/>
<path d="M0 227l5 5-5 5z" fill="#e6dce4"/>
<path d="M0 168l5 5-5 5z" fill="#e6dce4"/><path d="M65 168l-5 5 5 5z" fill="#e6dce4"/>
<!-- calc -->
<rect x="6" y="266" width="52" height="52" rx="5" fill="#6f2e70"/>
<path d="M13 269h28l11 11v33H13z" fill="#18891d"/><path d="M16 272h23l10 10v28H16z" fill="#f4f4f2"/><path d="M43 269l9 0v9z" fill="#6ac06a"/>
<g fill="none" stroke="#18891d" stroke-width="1.100"><rect x="21" y="286" width="22" height="17" fill="#bde5bd"/><path d="M21 291h22M21 296h22M28 286v17M35 286v17"/></g>
<rect x="34" y="297" width="11" height="10" fill="#fff" stroke="#555"/><path d="M37 305v-4M40 305v-6M43 305v-3" stroke="#d07020" stroke-width="1.500"/>
<!-- impress -->
<rect x="6" y="325" width="52" height="52" rx="5" fill="#6f2e70"/>
<path d="M13 328h28l11 11v33H13z" fill="#8a3d12"/><path d="M16 331h23l10 10v28H16z" fill="#f4f4f2"/><path d="M43 328l9 0v9z" fill="#b87548"/>
<rect x="21" y="345" width="23" height="16" fill="#f3d7c0" stroke="#8a3d12"/><path d="M24 349h6M24 353h6M24 357h6" stroke="#c05a18" stroke-width="1.500"/><rect x="33" y="347" width="9" height="8" fill="#fff" stroke="#555"/><path d="M34 354l3-3 2 1 3-3" stroke="#3a9a3a" fill="none"/>
<path d="M32 361v4M28 368l4-3 4 3" stroke="#666" fill="none"/>
<!-- software -->
<rect x="6" y="384" width="52" height="52" rx="5" fill="#7a3a78"/>
<rect x="11" y="395" width="42" height="36" fill="#ee7c35"/>
<path d="M24 395v-6h16v6" fill="none" stroke="#ee7c35" stroke-width="2.600"/>
<text x="22.500" y="421" font-size="22" font-weight="bold" fill="#fff">A</text><rect x="22" y="416" width="20" height="2" fill="#fff"/><rect x="20" y="420" width="24" height="2" fill="#fff"/>
<!-- settings -->
<rect x="6" y="443" width="52" height="52" rx="5" fill="#7a3a78"/>
<circle cx="32" cy="469" r="17" fill="none" stroke="#dcdcdc" stroke-width="4" stroke-dasharray="7 4.500"/>
<circle cx="32" cy="469" r="11" fill="none" stroke="#dcdcdc" stroke-width="9"/>
<path d="M16 485l24-24" stroke="#b8332a" stroke-width="5.500" stroke-linecap="round"/><circle cx="16" cy="485" r="1.500" fill="#5a1410"/>
<path d="M37 463q-1-9 7-11l4-1-5 6 3 3 6-5q1 9-8 11z" fill="#e8e8e8"/>
<!-- arduino -->
<rect x="6" y="502" width="52" height="52" rx="5" fill="#7a3a78"/>
<circle cx="32" cy="528" r="22" fill="#13919a"/>
<path d="M32 528c-5-7-9-8-12-8a8 8 0 0 0 0 16c3 0 7-1 12-8c5-7 9-8 12-8a8 8 0 0 1 0 16c-3 0-7-1-12-8z" fill="none" stroke="#fff" stroke-width="2.800"/>
<path d="M16 528h7M40 528h7M43.500 524.500v7" stroke="#fff" stroke-width="1.800"/>
<!-- sublime -->
<rect x="6" y="561" width="52" height="52" rx="5" fill="#b08150"/>
<path d="M13 569h38l3 32H10z" fill="#4a4a48"/><rect x="10" y="600" width="45" height="5" fill="#eee"/>
<path d="M13 569h38l1 8H12z" fill="#777" opacity=".6"/>
<text x="22" y="596" font-size="26" font-weight="bold" font-style="italic" fill="#f28c1e">S</text>
<path d="M0 582l5 5-5 5z" fill="#e6dce4"/>
<!-- trash -->
<rect x="6" y="710" width="52" height="52" rx="5" fill="#7a3a78"/>
<path d="M14 716h36l-4 42H18z" fill="#a884a4" opacity=".7"/><ellipse cx="32" cy="717" rx="18" ry="4" fill="#8a6a88" stroke="#ccc" stroke-width="2"/>
<path d="M19 734l4-5 4 3 4-5 5 2 4-2 5 6 2 8-3 3 1 7-4 5H23l-4-6 1-6-3-4z" fill="#ececec"/>

</svg>
</body></html>
